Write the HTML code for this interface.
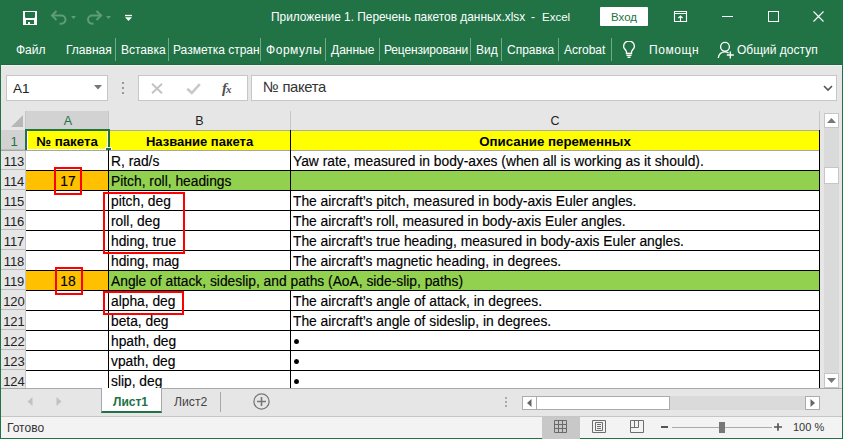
<!DOCTYPE html>
<html><head><meta charset="utf-8">
<style>
*{margin:0;padding:0;box-sizing:border-box}
html,body{width:843px;height:439px;overflow:hidden;background:#217346;font-family:"Liberation Sans",sans-serif}
.a{position:absolute}
.t{position:absolute;white-space:nowrap;line-height:1}
#title{left:0;top:0;width:843px;height:64px;background:#217346}
.rt{color:#fff;font-size:12px;top:44px}
.sep{position:absolute;width:1px;background:#6faa8a;top:38px;height:23px}
#fbar{left:1px;top:64px;width:841px;height:47px;background:#e6e6e6;border-top:1px solid #1c6b3e;box-shadow:inset 0 1px 0 #f2f2f2}
.box{position:absolute;background:#fff;border:1px solid #c6c6c6}
#grid{left:1px;top:111px;width:841px;height:278px;background:#fff;overflow:hidden}
.ch{position:absolute;top:111px;height:19px;background:#e6e6e6;border-right:1px solid #c6c6c6;color:#222;font-size:12.5px;text-align:center;line-height:21px;padding-left:2px}
.rh{position:absolute;left:1px;width:24px;height:20px;background:#e6e6e6;border-bottom:1px solid #bdbdbd;color:#222;font-size:13px;text-align:center;line-height:23px;padding-left:2px}
.c{position:absolute;font-size:13.8px;color:#000;white-space:nowrap;line-height:24px;-webkit-text-stroke:0.15px #000}
.hl{position:absolute;height:1px;background:#000}
.vl{position:absolute;width:1px;background:#000}
.red{position:absolute;border:2px solid #ff0000}
#tabs{left:1px;top:389px;width:841px;height:27px;background:#e6e6e6}
#status{left:1px;top:416px;width:841px;height:22px;background:#f3f3f3;border-top:1px solid #c6c6c6}
</style></head><body>
<div id="title" class="a">
  <!-- save icon -->
  <svg class="a" style="left:23px;top:11px" width="14" height="14" viewBox="0 0 14 14"><path fill="#fff" fill-rule="evenodd" d="M0 0H14V14H0Z M2 1V6.2L2.8 7H11.2L12 6.2V1Z M3 9V13H5V11H7V13H11V9Z"/></svg>
  <svg class="a" style="left:50px;top:9px" width="64" height="18" viewBox="0 0 64 18"><g fill="none" stroke="#5e9c7a" stroke-width="2"><path d="M2.5 6.5H11.4A4.1 4.1 0 0 1 11.4 14.7H9.5"/><path d="M6.5 2L2 6.5 6.5 11"/><path d="M51.5 6.5H42.1A4.1 4.1 0 0 0 42.1 14.7H43.5"/><path d="M46.5 2L51 6.5 46.5 11"/></g><path d="M21 7h5l-2.5 3z M56 7h5l-2.5 3z" fill="#5e9c7a"/></svg>
  <svg class="a" style="left:125px;top:14px" width="7" height="8" viewBox="0 0 7 8"><path d="M0 1.5h7" stroke="#fff" stroke-width="1.3"/><path d="M0 3.2h7l-3.5 3.8z" fill="#fff"/></svg>
  <div class="t" style="left:271px;top:12px;color:#fff;font-size:11.9px">Приложение 1. Перечень пакетов данных.xlsx</div>
  <div class="t" style="left:531px;top:12px;color:#fff;font-size:11.9px">-</div>
  <div class="t" style="left:542px;top:12px;color:#fff;font-size:11.5px">Excel</div>
  <div class="a" style="left:600px;top:7px;width:48px;height:19px;background:#fff;border-radius:1px"></div>
  <div class="t" style="left:611px;top:12px;color:#217346;font-size:11.5px">Вход</div>
  <svg class="a" style="left:673px;top:10px" width="15" height="13" viewBox="0 0 15 13"><g fill="none" stroke="#fff" stroke-width="1.1"><path d="M1.5 1.5h12v10h-12zM1.5 3.5h12"/><path d="M7.5 11V6M5.3 8.2L7.5 6 9.7 8.2"/></g></svg>
  <div class="a" style="left:722px;top:16px;width:11px;height:1px;background:#fff"></div>
  <div class="a" style="left:768px;top:11px;width:11px;height:11px;border:1px solid #fff"></div>
  <svg class="a" style="left:812px;top:10px" width="13" height="13" viewBox="0 0 13 13"><path d="M1.5 1.5l10 10M11.5 1.5l-10 10" stroke="#fff" stroke-width="1.1"/></svg>

  <div class="t rt" style="left:16px">Файл</div>
  <div class="t rt" style="left:66px">Главная</div>
  <div class="sep" style="left:115px"></div>
  <div class="t rt" style="left:121px">Вставка</div>
  <div class="sep" style="left:168px"></div>
  <div class="t rt" style="left:173px">Разметка стран</div>
  <div class="sep" style="left:260px"></div>
  <div class="t rt" style="left:266px;letter-spacing:0.55px">Формулы</div>
  <div class="sep" style="left:325px"></div>
  <div class="t rt" style="left:331px">Данные</div>
  <div class="sep" style="left:379px"></div>
  <div class="t rt" style="left:384px;letter-spacing:-0.15px">Рецензировани</div>
  <div class="sep" style="left:470px"></div>
  <div class="t rt" style="left:476px">Вид</div>
  <div class="sep" style="left:501px"></div>
  <div class="t rt" style="left:507px">Справка</div>
  <div class="sep" style="left:558px"></div>
  <div class="t rt" style="left:564px">Acrobat</div>
  <div class="sep" style="left:611px"></div>
  <svg class="a" style="left:622px;top:41px" width="14" height="18" viewBox="0 0 14 18"><g fill="none" stroke="#fff" stroke-width="1.35"><path d="M4.5 12.5V11C4.5 9 1.6 7.8 1.6 5.4A5.4 5.4 0 1 1 12.4 5.4C12.4 7.8 9.5 9 9.5 11V12.5Z"/><path d="M4.5 14.3H9.5M5.5 16.2H8.5"/></g></svg>
  <div class="t rt" style="left:649px;letter-spacing:0.6px">Помощн</div>
  <svg class="a" style="left:716px;top:41px" width="19" height="18" viewBox="0 0 19 18"><g fill="none" stroke="#fff" stroke-width="1.35"><circle cx="9" cy="5.8" r="4.4"/><path d="M2.3 17C2.8 13.2 5.5 10.9 9 10.9C10.4 10.9 11.6 11.3 12.6 12"/><path d="M14.3 10.5V17.5M10.8 14H17.8"/></g></svg>
  <div class="t rt" style="left:737px">Общий доступ</div>
</div>

<div id="fbar" class="a">
  <div class="box" style="left:5px;top:10px;width:102px;height:26px"></div>
  <div class="t" style="left:12px;top:17px;font-size:13.5px;color:#222">A1</div>
  <svg class="a" style="left:93px;top:20px" width="9" height="5"><path d="M0 0h8l-4 4.5z" fill="#777"/></svg>
  <div class="a" style="left:121px;top:17px;width:2px;height:2px;background:#999"></div>
  <div class="a" style="left:121px;top:22px;width:2px;height:2px;background:#999"></div>
  <div class="a" style="left:121px;top:27px;width:2px;height:2px;background:#999"></div>
  <div class="box" style="left:137px;top:10px;width:110px;height:26px"></div>
  <svg class="a" style="left:150px;top:18px" width="12" height="11"><path d="M1 0.7L11 10.3M11 0.7L1 10.3" stroke="#c2c2c2" stroke-width="1.9"/></svg>
  <svg class="a" style="left:185px;top:18px" width="15" height="12"><path d="M1.3 5.8L5.8 10 13.8 1.2" fill="none" stroke="#c8c8c8" stroke-width="2.6"/></svg>
  <div class="t" style="left:221px;top:16px;font-family:'Liberation Serif',serif;font-style:italic;font-weight:bold;font-size:15px;color:#505050">f<span style="font-size:11px;margin-left:-1px">x</span></div>
  <div class="box" style="left:250px;top:10px;width:586px;height:26px"></div>
  <div class="t" style="left:262px;top:15px;font-size:14.8px;letter-spacing:-0.3px;color:#333">№ пакета</div>
  <svg class="a" style="left:822px;top:20px" width="10" height="7"><path d="M1 1l4 4 4-4" fill="none" stroke="#555" stroke-width="1.6"/></svg>
</div>

<!--GRID-->
<div class="a" style="left:1px;top:111px;width:841px;height:278px;background:#fff"></div>
<div class="a" style="left:1px;top:111px;width:25px;height:19px;background:#e6e6e6;border-right:1px solid #c6c6c6"></div>
<svg class="a" style="left:11px;top:115px" width="12" height="12"><path d="M12 0V12H0z" fill="#b7b7b7"/></svg>
<div class="ch" style="left:26px;width:83px;background:#d2d2d2;color:#217346;height:19px">A</div>
<div class="ch" style="left:109px;width:182px;padding-left:0">B</div>
<div class="ch" style="left:291px;width:529px;padding-left:0">C</div>
<div class="a" style="left:1px;top:130px;width:819px;height:1px;background:#ababab"></div>
<div class="a" style="left:25px;top:111px;width:1px;height:277px;background:#c6c6c6"></div>
<div class="rh" style="top:130px;background:#d2d2d2;color:#217346">1</div>
<div class="rh" style="top:150px">113</div>
<div class="rh" style="top:170px">114</div>
<div class="rh" style="top:190px">115</div>
<div class="rh" style="top:210px">116</div>
<div class="rh" style="top:230px">117</div>
<div class="rh" style="top:250px">118</div>
<div class="rh" style="top:270px">119</div>
<div class="rh" style="top:290px">120</div>
<div class="rh" style="top:310px">121</div>
<div class="rh" style="top:330px">122</div>
<div class="rh" style="top:350px">123</div>
<div class="rh" style="top:370px">124</div>
<div class="a" style="left:26px;top:131px;width:794px;height:19px;background:#ff0"></div>
<div class="a" style="left:26px;top:170px;width:83px;height:20px;background:#ffc000"></div>
<div class="a" style="left:109px;top:170px;width:711px;height:20px;background:#92d050"></div>
<div class="a" style="left:26px;top:270px;width:83px;height:20px;background:#ffc000"></div>
<div class="a" style="left:109px;top:270px;width:711px;height:20px;background:#92d050"></div>
<div class="a" style="left:1px;top:150px;width:819px;height:1px;background:#a6a6a6"></div>
<div class="hl" style="left:26px;top:170px;width:794px"></div>
<div class="hl" style="left:26px;top:190px;width:794px"></div>
<div class="hl" style="left:26px;top:210px;width:794px"></div>
<div class="hl" style="left:26px;top:230px;width:794px"></div>
<div class="hl" style="left:26px;top:250px;width:794px"></div>
<div class="hl" style="left:26px;top:270px;width:794px"></div>
<div class="hl" style="left:26px;top:290px;width:794px"></div>
<div class="hl" style="left:26px;top:310px;width:794px"></div>
<div class="hl" style="left:26px;top:330px;width:794px"></div>
<div class="hl" style="left:26px;top:350px;width:794px"></div>
<div class="hl" style="left:26px;top:370px;width:794px"></div>
<div class="hl" style="left:26px;top:390px;width:794px"></div>
<div class="vl" style="left:108px;top:130px;height:259px"></div>
<div class="vl" style="left:290px;top:130px;height:259px"></div>
<div class="vl" style="left:819px;top:130px;height:259px"></div>
<div class="a" style="left:290px;top:271px;width:1px;height:19px;background:#92d050"></div>
<div class="c" style="left:26px;top:130px;width:82px;text-align:center;font-weight:bold;font-size:13.3px;-webkit-text-stroke:0">№ пакета</div>
<div class="c" style="left:109px;top:130px;width:181px;text-align:center;font-weight:bold;font-size:13px;-webkit-text-stroke:0">Название пакета</div>
<div class="c" style="left:291px;top:130px;width:528px;text-align:center;font-weight:bold;font-size:13.3px;-webkit-text-stroke:0">Описание переменных</div>
<div class="c" style="left:111px;top:150px">R, rad/s</div>
<div class="c" style="left:293px;top:150px">Yaw rate, measured in body-axes (when all is working as it should).</div>
<div class="c" style="left:27px;top:170px;width:82px;text-align:center">17</div>
<div class="c" style="left:111px;top:170px">Pitch, roll, headings</div>
<div class="c" style="left:111px;top:190px">pitch, deg</div>
<div class="c" style="left:293px;top:190px">The aircraft’s pitch, measured in body-axis Euler angles.</div>
<div class="c" style="left:111px;top:210px">roll, deg</div>
<div class="c" style="left:293px;top:210px">The aircraft’s roll, measured in body-axis Euler angles.</div>
<div class="c" style="left:111px;top:230px">hding, true</div>
<div class="c" style="left:293px;top:230px">The aircraft’s true heading, measured in body-axis Euler angles.</div>
<div class="c" style="left:111px;top:250px">hding, mag</div>
<div class="c" style="left:293px;top:250px">The aircraft’s magnetic heading, in degrees.</div>
<div class="c" style="left:27px;top:270px;width:82px;text-align:center">18</div>
<div class="c" style="left:111px;top:270px">Angle of attack, sideslip, and paths (AoA, side-slip, paths)</div>
<div class="c" style="left:111px;top:290px">alpha, deg</div>
<div class="c" style="left:293px;top:290px">The aircraft’s angle of attack, in degrees.</div>
<div class="c" style="left:111px;top:310px">beta, deg</div>
<div class="c" style="left:293px;top:310px">The aircraft’s angle of sideslip, in degrees.</div>
<div class="c" style="left:111px;top:330px">hpath, deg</div>
<div class="a" style="left:294px;top:338.5px;width:5.3px;height:5.5px;border-radius:50%;background:#000"></div>
<div class="c" style="left:111px;top:350px">vpath, deg</div>
<div class="a" style="left:294px;top:358.5px;width:5.3px;height:5.5px;border-radius:50%;background:#000"></div>
<div class="c" style="left:111px;top:370px">slip, deg</div>
<div class="a" style="left:294px;top:378.5px;width:5.3px;height:5.5px;border-radius:50%;background:#000"></div>
<div class="a" style="left:27px;top:131px;width:81px;height:19px;border:1px solid #fff;border-top:0"></div>
<div class="a" style="left:25px;top:129px;width:2px;height:21px;background:#217346"></div>
<div class="a" style="left:25px;top:129px;width:85px;height:2px;background:#217346"></div>
<div class="a" style="left:108px;top:129px;width:2px;height:18px;background:#217346"></div>
<div class="a" style="left:105px;top:147px;width:7px;height:3px;background:#fff"></div>
<div class="a" style="left:106px;top:148px;width:5px;height:2px;background:#217346"></div>
<div class="red" style="left:54px;top:167px;width:28px;height:28px"></div>
<div class="red" style="left:103px;top:192px;width:82px;height:62px"></div>
<div class="red" style="left:55px;top:267px;width:28px;height:28px"></div>
<div class="red" style="left:103px;top:291px;width:81px;height:24px"></div>
<div class="a" style="left:820px;top:111px;width:22px;height:278px;background:#e6e6e6"></div>
<div class="a" style="left:824px;top:128px;width:15px;height:245px;background:#dadada"></div>
<div class="a" style="left:824px;top:113px;width:15px;height:15px;background:#fff;border:1px solid #c6c6c6"></div>
<svg class="a" style="left:827px;top:118px" width="9" height="5"><path d="M0 5h9L4.5 0z" fill="#777"/></svg>
<div class="a" style="left:824px;top:167px;width:15px;height:17px;background:#fff;border:1px solid #c6c6c6"></div>
<div class="a" style="left:824px;top:373px;width:15px;height:15px;background:#fff;border:1px solid #c6c6c6"></div>
<svg class="a" style="left:827px;top:378px" width="9" height="5"><path d="M0 0h9L4.5 5z" fill="#777"/></svg>
<div class="a" style="left:1px;top:388px;width:841px;height:1px;background:#a8a8a8"></div>
<!--/GRID-->

<div id="tabs" class="a"></div>
<svg class="a" style="left:27px;top:397px" width="6" height="9"><path d="M5.5 0v9L0.5 4.5z" fill="#c2c2c2"/></svg>
<svg class="a" style="left:56px;top:397px" width="6" height="9"><path d="M0.5 0v9L5.5 4.5z" fill="#c2c2c2"/></svg>
<div class="a" style="left:101px;top:388px;width:61px;height:25px;background:#fff;border-left:1px solid #a8a8a8;border-right:1px solid #a8a8a8;border-bottom:2px solid #217346"></div>
<div class="t" style="left:113px;top:396px;font-size:12px;font-weight:bold;color:#217346">Лист1</div>
<div class="t" style="left:174px;top:396px;font-size:12.2px;color:#444">Лист2</div>
<div class="a" style="left:220px;top:392px;width:1px;height:20px;background:#a8a8a8"></div>
<svg class="a" style="left:252px;top:392px" width="19" height="19" viewBox="0 0 19 19"><circle cx="9.5" cy="9.5" r="7.6" fill="none" stroke="#777" stroke-width="1.3"/><path d="M9.5 5v9M5 9.5h9" stroke="#777" stroke-width="1.6"/></svg>
<div class="a" style="left:505px;top:397px;width:2px;height:2px;background:#aaa"></div>
<div class="a" style="left:505px;top:401px;width:2px;height:2px;background:#aaa"></div>
<div class="a" style="left:505px;top:405px;width:2px;height:2px;background:#aaa"></div>
<div class="a" style="left:522px;top:396px;width:298px;height:14px;background:#dadada"></div>
<div class="a" style="left:522px;top:396px;width:15px;height:14px;background:#fff;border:1px solid #ababab"></div>
<svg class="a" style="left:527px;top:399px" width="5" height="8"><path d="M4.5 0v8L0 4z" fill="#666"/></svg>
<div class="a" style="left:536px;top:396px;width:134px;height:14px;background:#fff;border:1px solid #ababab"></div>
<div class="a" style="left:805px;top:396px;width:15px;height:14px;background:#fff;border:1px solid #ababab"></div>
<svg class="a" style="left:810px;top:399px" width="5" height="8"><path d="M0.5 0v8L5 4z" fill="#666"/></svg>
<div id="status" class="a">
  <div class="t" style="left:6px;top:5px;font-size:12px;color:#333">Готово</div>
  <div class="a" style="left:541px;top:0px;width:38px;height:22px;background:#c8c8c8"></div>
  <svg class="a" style="left:553px;top:3px" width="13" height="13" viewBox="0 0 13 13"><g fill="none" stroke="#6a6a6a" stroke-width="1"><path d="M0.5 0.5h12v12h-12zM4.5 0v13M8.5 0v13M0 4.5h13M0 8.5h13"/></g></svg>
  <svg class="a" style="left:591px;top:3px" width="14" height="13" viewBox="0 0 14 13"><g fill="none" stroke="#6e6e6e" stroke-width="1"><path d="M0.5 0.5h13v12h-13zM3.5 2.5h7v8h-7z"/><path d="M5 4.5h4M5 6.5h4M5 8.5h4"/></g></svg>
  <svg class="a" style="left:629px;top:3px" width="14" height="13" viewBox="0 0 14 13"><g fill="none" stroke="#6e6e6e" stroke-width="1"><path d="M0.5 0.5h13v12h-13zM0.5 7.5h8M4.5 0.5v7M8.5 0.5v7"/></g></svg>
  <div class="a" style="left:660px;top:9px;width:7px;height:2px;background:#555"></div>
  <div class="a" style="left:671px;top:10px;width:100px;height:1px;background:#aaa"></div>
  <div class="a" style="left:718px;top:5px;width:6px;height:11px;background:#777"></div>
  <svg class="a" style="left:773px;top:6px" width="8" height="8" viewBox="0 0 8 8"><path d="M0 4h8M4 0.3v7.4" stroke="#555" stroke-width="1.7"/></svg>
  <div class="t" style="left:792px;top:5px;font-size:11px;color:#333">100 %</div>
</div>
</body></html>
